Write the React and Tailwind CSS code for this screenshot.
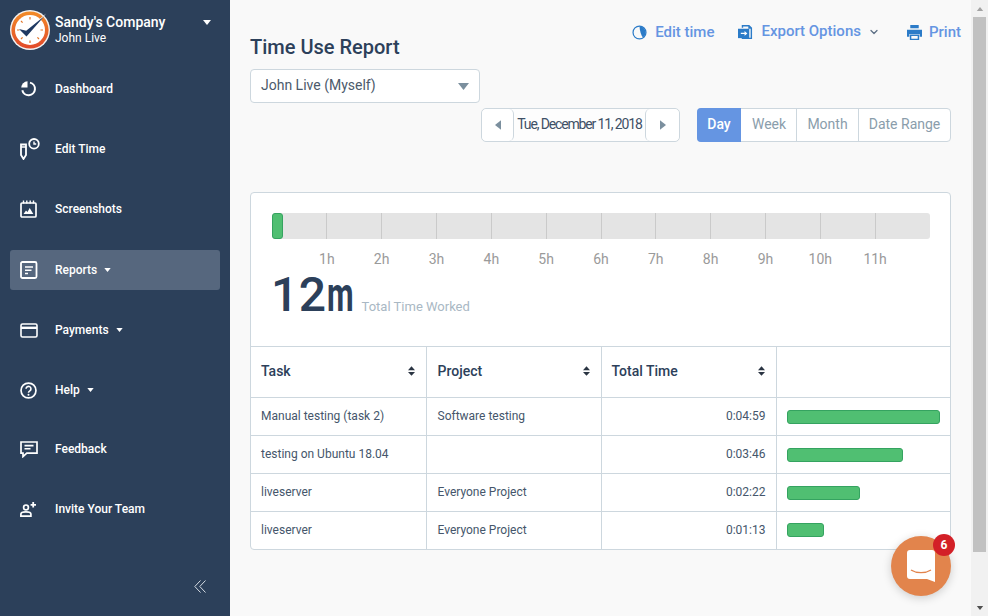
import React from "react";
import { ChevronDown } from "lucide-react";

const Caret = ({ className = "" }) => (
  <svg viewBox="0 0 8 5" className={className} fill="currentColor">
    <path d="M0 0h8L4 5z" />
  </svg>
);

const DashboardIcon = () => (
  <svg viewBox="0 0 18 18" className="w-[18px] h-[18px]" fill="none">
    <path d="M1.200 7.500A6.600 6.600 0 0 1 7.500 1.300v6.200z" fill="#fff" />
    <path d="M10 2.600a6.400 6.400 0 1 1-7.700 7.600" stroke="#fff" strokeWidth="2" />
  </svg>
);

const EditTimeIcon = () => (
  <svg viewBox="0 0 20 22" className="w-[20px] h-[22px]" fill="none">
    <path d="M1 6.500h5v10.500l-2.500 4L1 17z" stroke="#fff" strokeWidth="1.800" />
    <path d="M1 9h5" stroke="#fff" strokeWidth="1.500" />
    <circle cx="14" cy="5.800" r="4.800" stroke="#fff" strokeWidth="1.800" />
    <path d="M14 3.600v2.400h2.200" stroke="#fff" strokeWidth="1.400" />
  </svg>
);

const ScreenshotsIcon = () => (
  <svg viewBox="0 0 18 18" className="w-[18px] h-[18px]" fill="none">
    <rect x="1" y="3" width="15" height="14" rx="1" stroke="#fff" strokeWidth="1.700" />
    <path d="M3.500 0.500v3M6.800 0.500v3M10.200 0.500v3M13.500 0.500v3" stroke="#fff" strokeWidth="1.400" />
    <path d="M3.500 14l2.500-3.500 1.500 1.500 2.200-4 3.600 6z" fill="#fff" />
  </svg>
);

const ReportsIcon = () => (
  <svg viewBox="0 0 18 18" className="w-[18px] h-[18px]" fill="none">
    <rect x="1" y="1" width="15.500" height="16" rx="1.500" stroke="#fff" strokeWidth="1.800" />
    <path d="M5 6h8M5 9.200h6.500M5 12.500h3" stroke="#fff" strokeWidth="1.600" />
  </svg>
);

const PaymentsIcon = () => (
  <svg viewBox="0 0 18 15" className="w-[18px] h-[15px]" fill="none">
    <rect x="1" y="1" width="16" height="13" rx="1.500" stroke="#fff" strokeWidth="1.600" />
    <path d="M1 4.800h16" stroke="#fff" strokeWidth="2.400" />
  </svg>
);

const HelpIcon = () => (
  <svg viewBox="0 0 18 18" className="w-[17px] h-[17px]" fill="none">
    <circle cx="9" cy="9" r="7.900" stroke="#fff" strokeWidth="1.800" />
    <path d="M6.400 7.200a2.600 2.600 0 1 1 4 2.200c-.9.600-1.400 1-1.400 2" stroke="#fff" strokeWidth="1.700" />
    <circle cx="9" cy="13.400" r="1.050" fill="#fff" />
  </svg>
);

const FeedbackIcon = () => (
  <svg viewBox="0 0 18 17" className="w-[18px] h-[17px]" fill="none">
    <path d="M1 1h16v11.200H6.800L3 15.600v-3.400H1z" stroke="#fff" strokeWidth="1.700" />
    <path d="M4.500 4.600h9M4.500 7.800h6" stroke="#fff" strokeWidth="1.600" />
  </svg>
);

const InviteIcon = () => (
  <svg viewBox="0 0 17 15" className="w-[17px] h-[15px]" fill="none">
    <circle cx="6" cy="5.400" r="2.400" stroke="#fff" strokeWidth="1.700" />
    <path d="M.9 14.200v-2.200c0-1.400 2.600-2.200 5-2.200s5 .8 5 2.200v2.200z" stroke="#fff" strokeWidth="1.700" />
    <path d="M13.200 0v5.600M10.600 2.800h5.400" stroke="#fff" strokeWidth="1.800" />
  </svg>
);

const Logo = () => (
  <svg viewBox="0 0 40 40" className="w-10 h-10 shrink-0">
    <defs>
      <linearGradient id="ring" x1="0" y1="0" x2="0" y2="1">
        <stop offset="0" stopColor="#f28c28" />
        <stop offset="1" stopColor="#e2492a" />
      </linearGradient>
    </defs>
    <circle cx="20" cy="20" r="20" fill="#f3f3f3" />
    <circle cx="20" cy="20" r="18.600" fill="url(#ring)" />
    <circle cx="20" cy="20" r="15" fill="#fff" />
    <path d="M20 7v2.500M20 30.500V33M7 20h2.500M30.500 20H33M11 11l1.600 1.600M29 29l-1.600-1.600M11 29l1.600-1.600" stroke="#e2762a" strokeWidth="1.200" />
    <path d="M8.500 18.500l7.500 2.500L36 3.500 17 27z" fill="#fff" />
    <path d="M9 19l7.200 1.800L34.500 6 16.500 26.500z" fill="#1f3a63" />
  </svg>
);

const navItems = [
  { label: "Dashboard", icon: <DashboardIcon />, cls: "mt-[69px]" },
  { label: "Edit Time", icon: <EditTimeIcon />, cls: "mt-5" },
  { label: "Screenshots", icon: <ScreenshotsIcon />, cls: "mt-5" },
  { label: "Reports", icon: <ReportsIcon />, cls: "mt-[21px]", caret: true, active: true },
  { label: "Payments", icon: <PaymentsIcon />, cls: "mt-5", caret: true },
  { label: "Help", icon: <HelpIcon />, cls: "mt-5", caret: true },
  { label: "Feedback", icon: <FeedbackIcon />, cls: "mt-[19px]" },
  { label: "Invite Your Team", icon: <InviteIcon />, cls: "mt-5" },
];

const rows = [
  { task: "Manual testing (task 2)", project: "Software testing", time: "0:04:59", width: 153 },
  { task: "testing on Ubuntu 18.04", project: "", time: "0:03:46", width: 116 },
  { task: "liveserver", project: "Everyone Project", time: "0:02:22", width: 73 },
  { task: "liveserver", project: "Everyone Project", time: "0:01:13", width: 37 },
];

const hours = ["1h", "2h", "3h", "4h", "5h", "6h", "7h", "8h", "9h", "10h", "11h"];

const Sidebar = () => (
  <aside className="w-[230px] shrink-0 bg-[#2c405a] text-white flex flex-col">
    <div className="h-0 flex items-start">
      <div className="flex pl-[10px] pt-[10px] w-full">
        <Logo />
        <div className="ml-[5px] flex-1 pt-[4px]">
          <div className="text-[14px] leading-[16px] font-medium">Sandy's Company</div>
          <div className="text-[12px] leading-[16px]">John Live</div>
        </div>
        <Caret className="w-[8px] h-[5px] mr-[19px] mt-[10px]" />
      </div>
    </div>
    {navItems.map((item) => (
      <div
        key={item.label}
        className={`${item.cls} mx-[10px] h-10 rounded-[3px] flex items-center ${item.active ? "bg-[#56677e]" : ""}`}
      >
        <div className="w-[35px] pl-[10px] flex items-center shrink-0 justify-start">{item.icon}</div>
        <span className="ml-[10px] text-[12px] font-medium">{item.label}</span>
        {item.caret && <Caret className="w-[7px] h-[4px] ml-[7px]" />}
      </div>
    ))}
    <div className="mt-auto pb-[23px] pr-[24px] flex justify-end">
      <svg viewBox="0 0 12 13" className="w-[12px] h-[13px]" fill="none" stroke="#d5dbe2">
        <path d="M6.500 .5L.8 6.500l5.700 6M11.500 .5L5.800 6.500l5.700 6" />
      </svg>
    </div>
  </aside>
);

const Toolbar = () => (
  <div className="flex items-start justify-between">
    <div className="pt-[35px]">
      <h1 className="text-[20px] leading-[24px] font-medium text-[#2c405a]">Time Use Report</h1>
      <div className="mt-[10px] w-[230px] h-[34px] bg-white border border-[#cdd7de] rounded-[4px] flex items-center justify-between pl-[10px] pr-[10px]">
        <span className="text-[14px] pb-px text-[#4c5a6b]">John Live (Myself)</span>
        <Caret className="w-[11px] h-[7px] text-[#7b8f9e]" />
      </div>
    </div>
    <div className="flex items-center pt-[20px] -mr-[10px] text-[15px] font-medium text-[#6595e2]">
      <svg viewBox="0 0 16 16" className="w-[15px] h-[15px]" fill="none">
        <circle cx="8" cy="8" r="6.900" stroke="#2b7bc8" strokeWidth="1.300" />
        <path d="M8 1.500a6.500 6.500 0 0 1 3.600 11.900C9.600 11 8.300 6 8 1.500z" fill="#2b7bc8" />
      </svg>
      <span className="ml-[8px]">Edit time</span>
      <svg viewBox="0 0 16 16" className="ml-[24px] w-[15px] h-[15px]" fill="#2b7bc8">
        <path d="M4 0h8l3 3v12H4v-1.500h9.500V4H11V1.500H5.500V3H4z" />
        <path d="M0 4h12v10H0z" />
        <path d="M3 8.300h4V6.500l3 2.500-3 2.500V9.700H3z" fill="#fff" />
      </svg>
      <span className="ml-[8px] pb-[2px]">Export Options</span>
      <ChevronDown size={12} strokeWidth={2.500} color="#5d6f85" className="ml-[7px]" />
      <svg viewBox="0 0 16 16" className="ml-[27px] w-[15px] h-[15px]" fill="#2b7bc8">
        <path d="M3.500 0h9v3.500h-9zM0 5h16v7.500h-2.500V9.500h-11v3H0z" />
        <path d="M3.800 11h8.400v4.500H3.800z" fill="none" stroke="#2b7bc8" strokeWidth="1.600" />
      </svg>
      <span className="ml-[7px]">Print</span>
    </div>
  </div>
);

const DateRow = () => (
  <div className="mt-[5px] flex">
    <div className="ml-[231px] w-[199px] h-[34px] flex items-center bg-[#fdfdfd] border border-[#cdd7de] rounded-[5px]">
      <div className="w-[32px] h-full shrink-0 bg-white border-r border-[#cdd7de] rounded-[5px] flex items-center justify-center">
        <Caret className="w-[10px] h-[6px] rotate-90 text-[#7b8f9e]" />
      </div>
      <span className="flex-1 text-center text-[14px] pb-px tracking-[-1.150px] text-[#3f5066] whitespace-nowrap">Tue, December 11, 2018</span>
      <div className="w-[34px] h-full shrink-0 bg-white border-l border-[#cdd7de] rounded-[5px] flex items-center justify-center">
        <Caret className="w-[10px] h-[6px] -rotate-90 text-[#7b8f9e]" />
      </div>
    </div>
    <div className="ml-[17px] h-[34px] flex text-[14px] text-[#8a9dab] bg-white border border-[#cdd7de] rounded-[4px]">
      <div className="w-[44px] -m-px mr-0 h-[34px] pb-px bg-[#6595e2] text-white font-medium rounded-l-[4px] flex items-center justify-center">Day</div>
      <div className="w-[56px] pb-px pl-px border-r border-[#cdd7de] flex items-center justify-center">Week</div>
      <div className="w-[62px] pb-px border-r border-[#cdd7de] flex items-center justify-center">Month</div>
      <div className="w-[91px] pb-px flex items-center justify-center">Date Range</div>
    </div>
  </div>
);

const Timeline = () => (
  <div className="h-[153px] pl-[21px] pr-[20px] pt-[20px]">
    <div className="relative h-[26px] bg-[#e4e4e4] rounded-[3px] flex">
      {Array.from({ length: 12 }).map((_, i) => (
        <div key={i} className={`flex-1 ${i < 11 ? "border-r border-[#cacaca]" : ""}`} />
      ))}
      <div className="absolute left-0 top-0 w-[11px] h-[26px] bg-[#50bf72] border border-[#35a360] rounded-[3px]" />
    </div>
    <div className="mt-[11px] flex text-[14px] leading-[18px] text-[#9a9a9a]">
      {hours.map((h) => (
        <div key={h} className="flex-1 text-right">
          <span className="inline-block translate-x-1/2">{h}</span>
        </div>
      ))}
      <div className="flex-1" />
    </div>
    <div className="-mt-[1px] -ml-[1px] flex items-baseline text-[#2c405a]">
      <span className="text-[48px] leading-[56px] font-medium tracking-[.5px]">12</span>
      <span className="inline-block w-[27px] text-[48px] leading-[56px] font-bold origin-left scale-x-[.64]">m</span>
      <span className="ml-[8px] text-[13px] text-[#a9b8c4]">Total Time Worked</span>
    </div>
  </div>
);

const HeadCell = ({ label, sort, border = true, inset = false }) => (
  <th className={`p-0 pr-[11px] ${inset ? "pl-[11px]" : "pl-[10px]"} h-[51px] text-left text-[14px] font-medium text-[#2c405a] border-b border-[#cdd7de] ${border ? "border-r" : ""}`}>
    <div className="flex items-center justify-between pb-[2px]">
      <span>{label}</span>
      {sort && (
        <svg viewBox="0 0 8 11" className="w-[7px] h-[10px]" fill="#2a3442">
          <path d="M4 0l4 4.500H0zM4 11L0 6.500h8z" />
        </svg>
      )}
    </div>
  </th>
);

const ReportTable = () => (
  <table className="w-full table-fixed border-collapse border-t border-[#cdd7de]">
    <colgroup>
      <col className="w-[175px]" />
      <col className="w-[175px]" />
      <col className="w-[175px]" />
      <col />
    </colgroup>
    <thead>
      <tr>
        <HeadCell label="Task" sort />
        <HeadCell label="Project" sort inset />
        <HeadCell label="Total Time" sort />
        <HeadCell border={false} />
      </tr>
    </thead>
    <tbody className="text-[12px] text-[#45566b]">
      {rows.map((row, i) => {
        const isLast = i === rows.length - 1;
        const textPad = isLast ? "pb-0" : "pb-[2px]";
        return (
          <tr key={i} className={isLast ? "h-[37px]" : "border-b border-[#cdd7de] h-[38px]"}>
            <td className={`px-[10px] ${textPad} border-r border-[#cdd7de]`}>{row.task}</td>
            <td className={`pl-[11px] pr-[10px] ${textPad} border-r border-[#cdd7de]`}>{row.project}</td>
            <td className={`px-[10px] ${textPad} border-r border-[#cdd7de] text-right`}>{row.time}</td>
            <td className="px-[10px]">
              <div
                className="h-[14px] bg-[#50bf72] border border-[#35a360] rounded-[3px]"
                style={{ width: row.width }}
              />
            </td>
          </tr>
        );
      })}
    </tbody>
  </table>
);

const Scrollbar = () => (
  <div className="w-[17px] shrink-0 bg-[#f1f1f1] flex flex-col items-center">
    <div className="h-[17px] flex items-center justify-center">
      <Caret className="w-[8px] h-[4px] rotate-180 text-[#a3a3a3]" />
    </div>
    <div className="w-[13px] h-[535px] bg-[#c1c1c1]" />
    <div className="mt-auto h-[17px] flex items-center justify-center">
      <Caret className="w-[8px] h-[4px] text-[#505050]" />
    </div>
  </div>
);

const ChatBubble = () => (
  <div className="absolute left-[891px] top-[536px] w-[60px] h-[60px] rounded-full bg-[#e2844c] shadow-[0_2px_10px_rgba(0,0,0,0.18)] flex items-center justify-center">
    <svg viewBox="0 0 28 32" className="w-[28px] h-[32px]">
      <path d="M3 0h22a3 3 0 0 1 3 3v29l-8-3H3a3 3 0 0 1-3-3V3a3 3 0 0 1 3-3z" fill="#fff" />
      <path d="M4 20c5.500 3.500 14.500 3.500 20 0" fill="none" stroke="#e2844c" strokeWidth="1.400" />
    </svg>
    <div className="absolute left-[42px] -top-[2px] w-[22px] h-[22px] rounded-full bg-[#d32027] text-white text-[12px] font-bold flex items-center justify-center">6</div>
  </div>
);

export default function App() {
  return (
    <div className="relative w-[988px] h-[616px] overflow-hidden flex bg-[#f9f9f9] font-['Roboto',sans-serif]">
      <Sidebar />
      <main className="flex-1 px-5">
        <Toolbar />
        <DateRow />
        <div className="mt-[50px] bg-white border border-[#cdd7de] rounded-[4px] overflow-hidden">
          <Timeline />
          <ReportTable />
        </div>
      </main>
      <Scrollbar />
      <ChatBubble />
    </div>
  );
}
